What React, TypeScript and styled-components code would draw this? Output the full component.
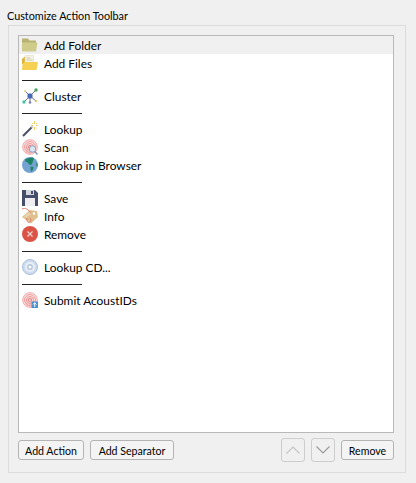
import React from 'react'
import styled, { createGlobalStyle } from 'styled-components'

const GlobalStyle = createGlobalStyle`
  html, body {
    margin: 0;
    padding: 0;
    background: #f0f0f0;
  }
`

const Page = styled.div`
  box-sizing: border-box;
  width: 416px;
  height: 483px;
  padding: 8px 10px 10px 8px;
  display: flex;
  flex-direction: column;
  background: #f0f0f0;
  color: #000;
  font-family: Lato, 'Open Sans', sans-serif;
  font-size: 10.8px;
`

const GroupTitle = styled.div`
  height: 17px;
  line-height: 16px;
  margin-left: -1px;
`

const GroupBox = styled.div`
  flex: 1;
  box-sizing: border-box;
  border: 1px solid #dcdcdc;
  padding: 9px 11px 10px 9px;
  display: flex;
  flex-direction: column;
  gap: 5px;
`

const ActionList = styled.div`
  flex: 1;
  box-sizing: border-box;
  border: 1px solid #b9b9b9;
  background: #fff;
  display: flex;
  flex-direction: column;
`

const ActionRow = styled.div<{ $selected?: boolean }>`
  height: 18px;
  flex: none;
  display: flex;
  align-items: center;
  gap: 6px;
  padding-left: 3px;
  background: ${({ $selected }) => ($selected ? '#f0f0f0' : 'transparent')};
  font-size: 11.9px;
  line-height: 16px;
`

const ActionLabel = styled.span`
  padding-top: 2px;
`

const IconSlot = styled.span`
  width: 16px;
  height: 16px;
  flex: none;
  svg {
    display: block;
  }
`

const SeparatorRow = styled.div`
  box-sizing: border-box;
  height: 15px;
  flex: none;
  padding: 8px 0 0 3px;
`

const SeparatorLine = styled.div`
  width: 60px;
  height: 1px;
  background: #222;
`

const Footer = styled.div`
  display: flex;
  align-items: center;
  height: 24px;
  gap: 6px;
`

const PushButton = styled.button<{ $width: number }>`
  box-sizing: border-box;
  height: 20px;
  padding: 1px 0 0;
  width: ${({ $width }) => $width}px;
  border: 1px solid #b4b4b4;
  border-radius: 3px;
  background: #f4f4f4;
  color: #000;
  font: inherit;
  font-size: 10.6px;
  line-height: 16px;
`

const ArrowButton = styled.button`
  box-sizing: border-box;
  width: 24px;
  height: 24px;
  padding: 0;
  display: flex;
  align-items: center;
  justify-content: center;
  border: 1px solid #cdcdcd;
  border-radius: 3px;
  background: #f0f0f0;
`

const Spacer = styled.div`
  flex: 1;
`

const FolderIcon = () => (
  <svg width="16" height="16" viewBox="0 0 16 16">
    <path d="M0 1.500h6l1.500 2H14V14H0z" fill="#b8b273" />
    <path d="M0 5.500h15.500L14 14.500H0z" fill="#cfcb8b" />
  </svg>
)

const FilesIcon = () => (
  <svg width="16" height="16" viewBox="0 0 16 16">
    <path d="M0 4L3 1.500V9H0z" fill="#dcb53a" />
    <path d="M3 .5h8.500v9H3z" fill="#f5f1e2" stroke="#dcd6bd" strokeWidth=".5" />
    <path d="M4.500 3h4M4.500 5h6" stroke="#d3ccb0" />
    <path d="M2.500 7H16l-1.500 8H0L.5 9z" fill="#f5d052" />
  </svg>
)

const ClusterIcon = () => (
  <svg width="16" height="16" viewBox="0 0 16 16">
    <path d="M8 8L2 14M8 8L14 2M8 8L3 3M8 8L14 13M8 8V14.500" stroke="#6d7280" strokeWidth="1" />
    <circle cx="14" cy="2" r="1.700" fill="#46a660" />
    <circle cx="2" cy="14" r="1.700" fill="#3fcaa2" />
    <circle cx="3" cy="3" r="1" fill="#ecd27e" />
    <circle cx="14" cy="13" r="1" fill="#e8b84c" />
    <circle cx="8" cy="14.500" r="1.300" fill="#7c80c8" />
    <rect x="5.500" y="5.500" width="5" height="5" rx="1.500" fill="#4468b4" />
  </svg>
)

const WandIcon = () => (
  <svg width="16" height="16" viewBox="0 0 16 16">
    <path d="M1 15L10.500 5.500" stroke="#4a4f63" strokeWidth="2" />
    <path d="M9.500 6.500L11 5" stroke="#d9d9d9" strokeWidth="2" />
    <path d="M12.500 0v3M12.500 6v3M9 4.500h2M14 4.500h2M10 2l1 1M15 2l-1 1M15 7.500l-1-1" stroke="#f0ce66" strokeWidth="1" />
  </svg>
)

const FingerprintRings = () => (
  <>
    <circle cx="8" cy="8" r="7.300" fill="#fbe5e5" stroke="#f1a7a7" strokeWidth="1" />
    <circle cx="8" cy="8" r="5.400" fill="none" stroke="#ee9696" strokeWidth="1" />
    <circle cx="8" cy="8" r="3.500" fill="none" stroke="#ee9090" strokeWidth="1" />
    <circle cx="8" cy="8" r="1.700" fill="none" stroke="#e88686" strokeWidth="1" />
    <path d="M8 7v8.500M5 9v5M11 9v5" stroke="#f1a7a7" strokeWidth="1" />
  </>
)

const ScanIcon = () => (
  <svg width="16" height="16" viewBox="0 0 16 16">
    <FingerprintRings />
    <circle cx="10.500" cy="10" r="3.200" fill="#dbe6f2" stroke="#8ea4c0" strokeWidth="1" />
    <path d="M12.800 12.500L15.500 15.500" stroke="#7f8fb0" strokeWidth="1.300" />
  </svg>
)

const GlobeIcon = () => (
  <svg width="16" height="16" viewBox="0 0 16 16">
    <circle cx="8" cy="8" r="8" fill="#74a2d2" />
    <path d="M3.500 2L10 .2c2 .5 2.500 2.300 1 3.300L10.500 6 9 8 7 7.500 5.500 5 3 4.500z" fill="#1c8465" />
    <path d="M8.500 9.500l3 .5-.5 2.500L9.500 15 8.500 12z" fill="#1c8465" />
    <path d="M14 5.500L15.800 7V9l-1.800.5z" fill="#3a9078" />
  </svg>
)

const SaveIcon = () => (
  <svg width="16" height="16" viewBox="0 0 16 16">
    <path d="M0 0h13l3 3v13H0z" fill="#464e69" />
    <rect x="4" y="0" width="8" height="5" fill="#d5d7df" />
    <rect x="9" y="1" width="2" height="3" fill="#464e69" />
    <rect x="3" y="8" width="10" height="8" fill="#eeeef2" />
  </svg>
)

const TagIcon = () => (
  <svg width="16" height="16" viewBox="0 0 16 16">
    <path d="M0 9L8 2l7 1 1 6-7 6.500z" fill="#dfc08f" />
    <path d="M3 9l6-4.500" stroke="#ead6b4" strokeWidth="2.500" />
    <circle cx="12" cy="5.500" r="1.200" fill="#fff" />
    <path d="M0 1c3-2 7 1 9 4.500M8 10c2 2 0 4.500-1 4.500S4 13 5 10" fill="none" stroke="#df6f64" strokeWidth=".9" />
  </svg>
)

const RemoveIcon = () => (
  <svg width="16" height="16" viewBox="0 0 16 16">
    <circle cx="8" cy="8" r="8" fill="#db5346" />
    <path d="M5.500 5.500l5 5M10.500 5.500l-5 5" stroke="#f8d8d4" strokeWidth="1.200" />
  </svg>
)

const DiscIcon = () => (
  <svg width="16" height="16" viewBox="0 0 16 16">
    <circle cx="8" cy="8" r="7.500" fill="#cfdcee" stroke="#a8bfdc" strokeWidth="1" />
    <circle cx="8" cy="8" r="5" fill="#e8eef7" />
    <circle cx="8" cy="8" r="2.900" fill="#b4c5da" />
    <circle cx="8" cy="8" r="1.500" fill="#fff" />
  </svg>
)

const SubmitIcon = () => (
  <svg width="16" height="16" viewBox="0 0 16 16">
    <FingerprintRings />
    <rect x="9.500" y="9.500" width="6.500" height="6.500" fill="#4a90cf" />
    <path d="M12.750 15v-4M11 12.500l1.750-1.750 1.750 1.750" fill="none" stroke="#fff" strokeWidth="1" />
  </svg>
)

const Chevron = ({ up }: { up?: boolean }) => (
  <svg width="14" height="8" viewBox="0 0 14 8">
    <path
      d={up ? 'M.5 7.500L7 1l6.500 6.500' : 'M.5.500L7 7l6.500-6.500'}
      fill="none"
      stroke={up ? '#c4c4c4' : '#9a9a9a'}
      strokeWidth="1.100"
    />
  </svg>
)

const actions: ({ label: string; icon: React.ReactNode } | null)[] = [
  { label: 'Add Folder', icon: <FolderIcon /> },
  { label: 'Add Files', icon: <FilesIcon /> },
  null,
  { label: 'Cluster', icon: <ClusterIcon /> },
  null,
  { label: 'Lookup', icon: <WandIcon /> },
  { label: 'Scan', icon: <ScanIcon /> },
  { label: 'Lookup in Browser', icon: <GlobeIcon /> },
  null,
  { label: 'Save', icon: <SaveIcon /> },
  { label: 'Info', icon: <TagIcon /> },
  { label: 'Remove', icon: <RemoveIcon /> },
  null,
  { label: 'Lookup CD...', icon: <DiscIcon /> },
  null,
  { label: 'Submit AcoustIDs', icon: <SubmitIcon /> },
]

export default function App() {
  return (
    <Page>
      <GlobalStyle />
      <GroupTitle>Customize Action Toolbar</GroupTitle>
      <GroupBox>
        <ActionList>
          {actions.map((action, i) =>
            action ? (
              <ActionRow key={i} $selected={i === 0}>
                <IconSlot>{action.icon}</IconSlot>
                <ActionLabel>{action.label}</ActionLabel>
              </ActionRow>
            ) : (
              <SeparatorRow key={i}>
                <SeparatorLine />
              </SeparatorRow>
            ),
          )}
        </ActionList>
        <Footer>
          <PushButton $width={66}>Add Action</PushButton>
          <PushButton $width={84}>Add Separator</PushButton>
          <Spacer />
          <ArrowButton>
            <Chevron up />
          </ArrowButton>
          <ArrowButton>
            <Chevron />
          </ArrowButton>
          <PushButton $width={53}>Remove</PushButton>
        </Footer>
      </GroupBox>
    </Page>
  )
}
